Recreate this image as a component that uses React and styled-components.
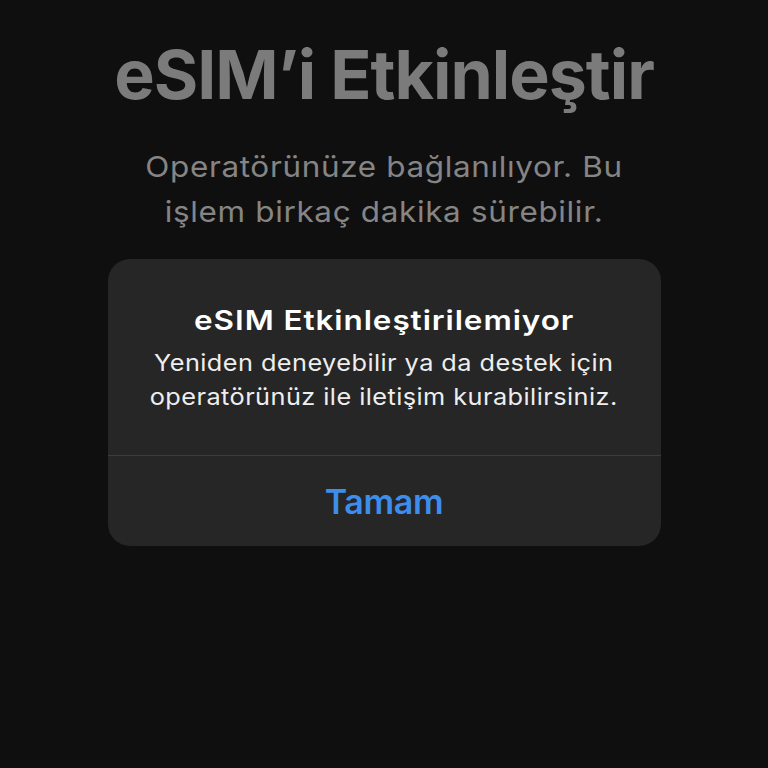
import styled, { createGlobalStyle } from 'styled-components';

const GlobalStyle = createGlobalStyle`
  html, body {
    margin: 0;
    padding: 0;
    background: #0f0f0f;
  }
  body {
    font-family: Inter, "Noto Sans", "Liberation Sans", sans-serif;
    -webkit-font-smoothing: antialiased;
  }
`;

const Screen = styled.div`
  width: 768px;
  height: 768px;
  background: #0f0f0f;
  display: flex;
  flex-direction: column;
  align-items: center;
  overflow: hidden;
`;

const Heading = styled.h1`
  margin: 34px 0 0;
  font-size: 68px;
  font-weight: 700;
  letter-spacing: -1px;
  line-height: 80px;
  color: #7b7b7b;
  text-align: center;
`;

// the screenshot's text runs wider than Inter, so the lines are widened a little
const Subtitle = styled.p`
  margin: 30px 0 0;
  font-size: 29px;
  font-weight: 400;
  line-height: 45px;
  color: #858585;
  text-align: center;
  letter-spacing: 0.6px;
  transform: scaleX(1.085);
`;

const Dialog = styled.div`
  margin-top: 25px;
  width: 553px;
  background: #262626;
  border-radius: 22px;
  display: flex;
  flex-direction: column;
  overflow: hidden;
`;

const DialogBody = styled.div`
  padding: 45px 24px 41px;
  display: flex;
  flex-direction: column;
  align-items: center;
  gap: 8px;
`;

const DialogTitle = styled.h2`
  margin: 0;
  font-size: 27px;
  font-weight: 600;
  line-height: 34px;
  color: #ffffff;
  letter-spacing: 0.8px;
  transform: scaleX(1.165);
`;

const DialogText = styled.p`
  margin: 0;
  font-size: 23px;
  line-height: 34px;
  color: #eeeeee;
  text-align: center;
  letter-spacing: 0.4px;
  transform: scaleX(1.1);
`;

const Divider = styled.div`
  height: 1px;
  background: #3c3c3c;
`;

const ActionButton = styled.button`
  height: 90px;
  border: 0;
  background: transparent;
  font-family: inherit;
  font-size: 34px;
  font-weight: 600;
  color: #3d8ded;
  letter-spacing: -0.3px;
  cursor: pointer;
`;

export default function App() {
  return (
    <>
      <GlobalStyle />
      <Screen>
        <Heading>eSIM’i Etkinleştir</Heading>
        <Subtitle>
          Operatörünüze bağlanılıyor. Bu
          <br />
          işlem birkaç dakika sürebilir.
        </Subtitle>
        <Dialog>
          <DialogBody>
            <DialogTitle>eSIM Etkinleştirilemiyor</DialogTitle>
            <DialogText>
              Yeniden deneyebilir ya da destek için
              <br />
              operatörünüz ile iletişim kurabilirsiniz.
            </DialogText>
          </DialogBody>
          <Divider />
          <ActionButton>Tamam</ActionButton>
        </Dialog>
      </Screen>
    </>
  );
}
